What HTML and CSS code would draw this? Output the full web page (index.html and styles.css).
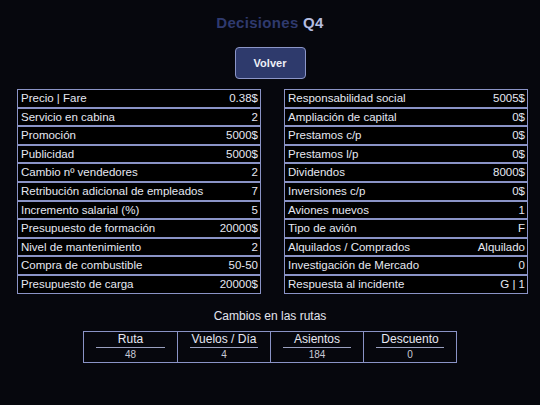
FILE: index.html
```html
<!DOCTYPE html>
<html lang="es">
<head>
  <meta charset="UTF-8">
  <meta name="viewport" content="width=device-width, initial-scale=1.0">
  <title>Decisiones Q4</title>
  <link rel="stylesheet" href="styles.css">
</head>
<body>
  <div class="pantalla">
    <h1 class="titulo">Decisiones <span class="trimestre">Q4</span></h1>
    <button class="btn-volver">Volver</button>

    <div class="tablas">
      <div class="tabla">
        <div class="fila"><span>Precio | Fare</span><span>0.38$</span></div>
        <div class="fila"><span>Servicio en cabina</span><span>2</span></div>
        <div class="fila"><span>Promoción</span><span>5000$</span></div>
        <div class="fila"><span>Publicidad</span><span>5000$</span></div>
        <div class="fila"><span>Cambio nº vendedores</span><span>2</span></div>
        <div class="fila"><span>Retribución adicional de empleados</span><span>7</span></div>
        <div class="fila"><span>Incremento salarial (%)</span><span>5</span></div>
        <div class="fila"><span>Presupuesto de formación</span><span>20000$</span></div>
        <div class="fila"><span>Nivel de mantenimiento</span><span>2</span></div>
        <div class="fila"><span>Compra de combustible</span><span>50-50</span></div>
        <div class="fila"><span>Presupuesto de carga</span><span>20000$</span></div>
      </div>
      <div class="tabla">
        <div class="fila"><span>Responsabilidad social</span><span>5005$</span></div>
        <div class="fila"><span>Ampliación de capital</span><span>0$</span></div>
        <div class="fila"><span>Prestamos c/p</span><span>0$</span></div>
        <div class="fila"><span>Prestamos l/p</span><span>0$</span></div>
        <div class="fila"><span>Dividendos</span><span>8000$</span></div>
        <div class="fila"><span>Inversiones c/p</span><span>0$</span></div>
        <div class="fila"><span>Aviones nuevos</span><span>1</span></div>
        <div class="fila"><span>Tipo de avión</span><span>F</span></div>
        <div class="fila"><span>Alquilados / Comprados</span><span>Alquilado</span></div>
        <div class="fila"><span>Investigación de Mercado</span><span>0</span></div>
        <div class="fila"><span>Respuesta al incidente</span><span>G | 1</span></div>
      </div>
    </div>

    <h2 class="subtitulo">Cambios en las rutas</h2>
    <div class="rutas">
      <div class="ruta-col"><div class="ruta-head">Ruta</div><div class="ruta-val">48</div></div>
      <div class="ruta-col"><div class="ruta-head">Vuelos / Día</div><div class="ruta-val">4</div></div>
      <div class="ruta-col"><div class="ruta-head">Asientos</div><div class="ruta-val">184</div></div>
      <div class="ruta-col"><div class="ruta-head">Descuento</div><div class="ruta-val">0</div></div>
    </div>
  </div>
</body>
</html>
```

FILE: styles.css
```css
body {
  margin: 0;
  background-color: #06070d;
  font-family: "Liberation Sans", Arial, sans-serif;
  color: #e6e8f2;
  height: 100vh;
}
.pantalla {
  display: flex;
  flex-direction: column;
  align-items: center;
}
.titulo {
  margin: 14px 0 0;
  font-size: 15px;
  line-height: 18px;
  font-weight: bold;
  color: #2f3a6e;
  letter-spacing: 0.3px;
}
.trimestre {
  color: #b5bde0;
}
.btn-volver {
  margin-top: 15px;
  width: 71px;
  height: 32px;
  background: #2e3a6c;
  border: 1px solid #8c96c8;
  border-radius: 4px;
  color: #eef0f8;
  font-family: inherit;
  font-size: 11px;
  font-weight: bold;
  cursor: pointer;
}
.tablas {
  margin-top: 10px;
  padding-left: 5px;
  display: grid;
  grid-template-columns: 244px 244px;
  gap: 23px;
}
.tabla {
  background: #000;
  border: 1px solid #8a93c6;
}
.fila {
  display: flex;
  justify-content: space-between;
  padding: 0 2px 0 3px;
  height: 16.6px;
  line-height: 17px;
  font-size: 11.5px;
  border-top: 1px solid #8a93c6;
  border-bottom: 1px solid #8a93c6;
}
.fila:first-child {
  border-top: none;
}
.fila:last-child {
  border-bottom: none;
}
.subtitulo {
  margin: 14px 0 0;
  font-size: 12px;
  line-height: 16px;
  font-weight: normal;
  color: #e2e4ee;
}
.rutas {
  margin-top: 7px;
  display: grid;
  grid-template-columns: repeat(4, 93px);
  border: 1px solid #8a93c6;
}
.ruta-col {
  border-left: 1px solid #8a93c6;
  padding: 1px 12px 1px;
  text-align: center;
}
.ruta-col:first-child {
  border-left: none;
}
.ruta-head {
  font-size: 12px;
  line-height: 13px;
  color: #e6e8f2;
  border-bottom: 1px solid #9aa0c0;
  padding-bottom: 1px;
}
.ruta-val {
  font-size: 10px;
  line-height: 13px;
  color: #c8cad6;
}
```
